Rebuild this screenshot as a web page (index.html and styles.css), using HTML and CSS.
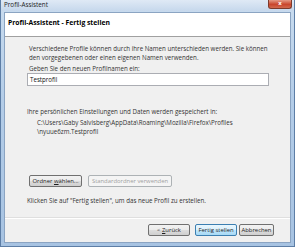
FILE: index.html
```html
<!DOCTYPE html>
<html lang="de">
<head>
    <meta charset="UTF-8">
    <title>Profil-Assistent</title>
    <link rel="stylesheet" href="styles.css">
</head>
<body>
    <div class="window">
        <div class="titlebar">
            <span class="title">Profil-Assistent</span>
            <span class="close">x</span>
        </div>
        <div class="client">
            <div class="header">Profil-Assistent - Fertig stellen</div>
            <div class="content">
                <p class="intro">
                    <span class="line">Verschiedene Profile können durch ihre Namen unterschieden werden. Sie können</span>
                    <span class="line">den vorgegebenen oder einen eigenen Namen verwenden.</span>
                </p>
                <p class="label">Geben Sie den neuen Profilnamen ein:</p>
                <div class="input">Testprofil</div>
                <p class="label storage">Ihre persönlichen Einstellungen und Daten werden gespeichert in:</p>
                <p class="path">
                    <span class="line">C:\Users\Gaby Salvisberg\AppData\Roaming\Mozilla\Firefox\Profiles</span>
                    <span class="line">\nyuue6zm.Testprofil</span>
                </p>
                <div class="folder-buttons">
                    <button class="btn choose">Ordner <u>w</u>ählen...</button>
                    <button class="btn standard" disabled>Standardordner verwenden</button>
                </div>
                <p class="label finish">Klicken Sie auf "Fertig stellen", um das neue Profil zu erstellen.</p>
            </div>
            <div class="footer">
                <button class="btn back">&lt; <u>Z</u>urück</button>
                <button class="btn default">Fertig stellen</button>
                <button class="btn cancel">Abbrechen</button>
            </div>
        </div>
    </div>
</body>
</html>
```

FILE: styles.css
```css
body {
    margin: 0;
    font-family: "Open Sans", "DejaVu Sans", sans-serif;
    font-size: 6.2px;
    color: #333;
}

.window {
    width: 295px;
    height: 247px;
    box-sizing: border-box;
    display: flex;
    flex-direction: column;
    background: linear-gradient(180deg, #c9dcef 0%, #b4cde8 40%, #a7c3e2 100%);
    border: 1px solid #5d7ea6;
    border-top: none;
}

.titlebar {
    height: 11px;
    display: flex;
    align-items: flex-start;
    justify-content: space-between;
    padding-left: 3px;
    background: linear-gradient(180deg, #dfe9f5 0%, #c6d8ec 100%);
}

.title {
    font-size: 6.3px;
    line-height: 10px;
    color: #222;
}

.close {
    width: 22px;
    height: 8px;
    margin-right: 2px;
    border-radius: 0 0 3px 3px;
    background: linear-gradient(180deg, #e59a86 0%, #c9462c 55%, #d26a4f 100%);
    border: 1px solid #7d3a2c;
    border-top: none;
    color: #fff;
    font-size: 6px;
    line-height: 7px;
    text-align: center;
    font-weight: bold;
}

.client {
    flex: 1;
    margin: 1px 3px 3px 3px;
    display: flex;
    flex-direction: column;
    background: #f0f0f0;
    border: 1px solid #8ba4c2;
}

.header {
    height: 24px;
    background: #fff;
    border-bottom: 1px solid #a0a0a0;
    box-sizing: border-box;
    padding: 5px 0 0 3px;
    font-weight: bold;
    font-size: 6.8px;
    color: #000;
}

.content {
    flex: 1;
    padding: 7px 8px 0 22px;
}

.content p {
    margin: 0;
    line-height: 9px;
    white-space: nowrap;
}

.line {
    display: block;
}

.intro {
    padding-left: 2px;
}

.label {
    margin-top: 2px !important;
    padding-left: 2px;
}

.input {
    height: 11px;
    border: 1px solid #abadb3;
    background: #fff;
    padding-left: 2px;
    line-height: 11px;
    width: 238px;
    color: #111;
}

.storage {
    margin-top: 21px !important;
    padding-left: 0;
}

.path {
    padding-left: 10px;
    margin-top: 2px !important;
}

.folder-buttons {
    display: flex;
    gap: 6px;
    margin-top: 39px;
    padding-left: 2px;
}

.btn {
    font-family: inherit;
    font-size: 5.9px;
    height: 12px;
    padding: 0;
    color: #1e1e1e;
    background: linear-gradient(180deg, #f2f2f2 0%, #ebebeb 50%, #dddddd 51%, #cfcfcf 100%);
    border: 1px solid #707070;
    border-radius: 2px;
    line-height: 10px;
    white-space: nowrap;
}

.choose {
    width: 53px;
}

.standard {
    width: 84px;
}

.btn:disabled {
    color: #a0a0a0;
    background: #f4f4f4;
    border-color: #adb2b5;
}

.finish {
    margin-top: 9px !important;
    padding-left: 0;
}

.footer {
    height: 25px;
    box-sizing: border-box;
    border-top: 1px solid #dfdfdf;
    box-shadow: inset 0 1px 0 #fff;
    display: flex;
    justify-content: flex-end;
    align-items: center;
    padding-right: 16px;
}

.back {
    width: 42px;
}

.default {
    width: 42px;
    margin-left: 5px;
    border-color: #3c7fb1;
    background: linear-gradient(180deg, #eaf6fd 0%, #d9f0fc 50%, #bee6fd 51%, #a7d9f5 100%);
}

.cancel {
    width: 35px;
    margin-left: 2px;
}
```
